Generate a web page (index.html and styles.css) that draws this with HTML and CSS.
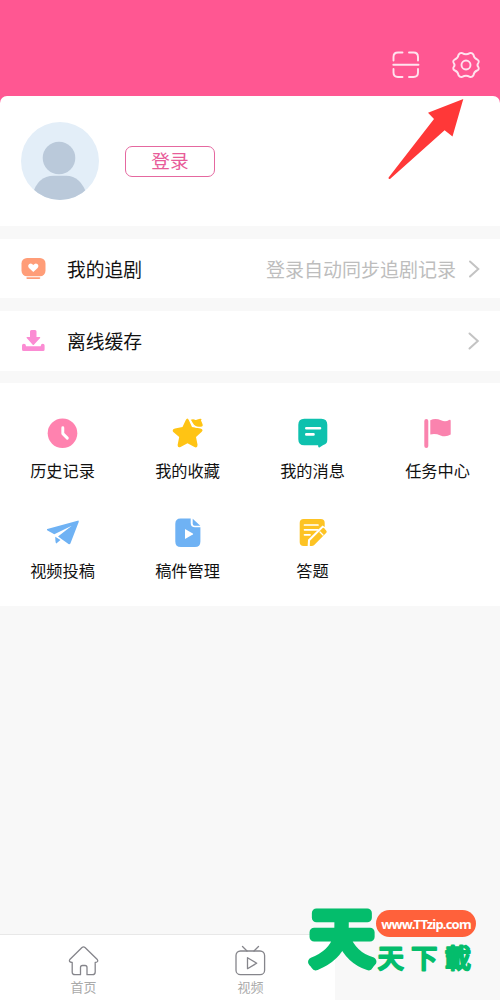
FILE: index.html
```html
<!DOCTYPE html>
<html lang="zh-CN">
<head>
<meta charset="utf-8">
<meta name="viewport" content="width=device-width, initial-scale=1">
<title>我的</title>
<link rel="stylesheet" href="styles.css">
</head>
<body>
<div class="screen">
  <header class="topbar">
    <svg class="top-icon" viewBox="0 0 30 30"><path d="M2.500 10.500V7q0-4.500 4.500-4.500h4.500M18 2.500h4.500Q27 2.500 27 7v3.500M2.500 19v3.500q0 4.500 4.500 4.500h4.500M18 27h4.500q4.500 0 4.500-4.500V19M2.300 14.700h25.200"/></svg>
    <svg class="top-icon" viewBox="0 0 30 30"><path d="M11.200 3.100Q15 5.300 18.800 3.100Q21 2.500 22.400 4.600Q23 8.400 26.200 9.500Q28.600 11 27.300 13Q25.600 15 27.300 17Q28.600 19.200 26.200 20.500Q23 21.600 22.400 25.400Q21 27.500 18.800 26.900Q15 24.700 11.200 26.900Q9 27.500 7.600 25.400Q7 21.600 3.800 20.500Q1.400 19 2.700 17Q4.400 15 2.700 13Q1.400 10.800 3.800 9.500Q7 8.400 7.600 4.600Q9 2.500 11.200 3.100Z"/><circle cx="15" cy="15" r="4.500"/></svg>
  </header>
  <section class="profile">
    <svg class="avatar" viewBox="0 0 78 78"><defs><clipPath id="avatar-clip"><circle cx="39" cy="39" r="39"/></clipPath></defs><g clip-path="url(#avatar-clip)"><path fill="#e3eef8" d="M0 0h78v78H0z"/><circle cx="38" cy="36" r="16.300" fill="#bac9da"/><path fill="#bac9da" d="M11.500 73Q16 54 33 53.700H45Q60 54 66 73V78H12Z"/></g></svg>
    <button class="login">登录</button>
    <svg class="pointer" viewBox="0 0 78 84"><path fill="#ff3838" d="M75.300 1 64.500 38.500 56.600 32.300 2.300 80.800Q0 81.500 .6 79.500L46 21 40 14.700Z"/></svg>
  </section>
  <a class="row">
    <svg class="row-icon" viewBox="0 0 26 26"><rect x="1.500" y="2" width="24" height="18.300" rx="5.500" fill="#ff9d78"/><rect x="6.300" y="21.300" width="14" height="1.600" rx=".8" fill="#ff9d78"/><path fill="#fff" d="M13.300 16 9 12Q7.300 9.700 9.200 8Q11.400 6.600 13.300 9Q15.200 6.600 17.400 8Q19.300 9.700 17.600 12Z"/></svg>
    <span class="row-title">我的追剧</span><span class="hint">登录自动同步追剧记录</span>
    <svg class="chevron" viewBox="0 0 12 18"><path d="M2 1.500 10.300 9 2 16.500"/></svg>
  </a>
  <a class="row row-cache">
    <svg class="row-icon" viewBox="0 0 26 26"><path fill="#fb8cd3" d="M10 3.500Q10 2 11.500 2h3.500Q16.500 2 16.500 3.500v5.500h3.300q.9.300.3 1.100L13.900 16.700q-.6.500-1.200 0L6.700 10.100q-.6-.8.300-1.100H10ZM2 17.500q0-1.700 1.900-1.700 1.900 0 2.200 2.400H20.600q.3-2.400 2.200-2.400 1.800 0 1.800 1.700v4q0 1.500-1.500 1.500H3.500Q2 23 2 21.500Z"/></svg>
    <span class="row-title">离线缓存</span>
    <svg class="chevron" viewBox="0 0 12 18"><path d="M1.500 1.500 9.800 9 1.500 16.500"/></svg>
  </a>
  <section class="grid">
    <a class="item"><svg viewBox="0 0 32 32"><circle cx="15.500" cy="16.200" r="14.800" fill="#ff82af"/><path class="cut" d="M15.800 10.800v5.800l4.500 4.500" stroke-width="2.900"/></svg>历史记录</a>
    <a class="item"><svg viewBox="0 0 32 32"><path fill="#ffc414" d="M13.800 3Q15.300 0 16.800 3L20 10 28.500 11.500Q32 12.500 29.500 15L24 20 25.500 27.500Q25.800 31.800 22 29.800L15.500 26.200 9 29.800Q5.200 31.500 5.700 27.500L7.200 20 1.300 15Q-.5 12.300 3 11.500L10.500 10Z"/><path fill="#ffc414" stroke="#fff" stroke-width="1.300" d="M18 2.500Q21 .6 23.800 2.400L28.500 1Q30.900 1.100 29.700 3.600L31.200 7Q32 10.900 28 10.300Q22.500 10.800 20.400 6.500Z"/></svg>我的收藏</a>
    <a class="item"><svg viewBox="0 0 32 32"><path fill="#0ec1ae" d="M7.300 1.800h17q6 0 6 6v15q0 4.500-4 5.200l-3.900 2.500q-1.300.5-1.300-2.200h-13.800q-6 0-6-6V7.800q0-6 6-6Z"/><path class="cut" d="M9.300 11.200h13.700M9.300 17.400h7.200" stroke-width="2.600"/></svg>我的消息</a>
    <a class="item"><svg viewBox="0 0 32 32"><rect x="2.300" y="2" width="4" height="29" rx="2" fill="#fa83ae"/><path fill="#fa83ae" d="M8.300 3.200Q13.500 .8 19 3.300 23.500 5.200 27 3 28.700 2 28.700 4V17.500Q24 20.500 18.500 18.400 13.500 16.400 8.300 17.500Z"/></svg>任务中心</a>
    <a class="item"><svg viewBox="0 0 32 32"><path fill="#6fb2f4" d="M31.500 3.500 .3 11.900Q-.7 12.400 .5 13.400L7.300 17.200 24.800 8.700 11 19.500 21.500 27Q22.700 27.700 23.400 26.500L31.800 4.800ZM8.300 19.700 13.500 22.900 9.300 26.400Q8.200 26 8.300 19.700Z"/></svg>视频投稿</a>
    <a class="item"><svg viewBox="0 0 32 32"><path fill="#6fb2f4" d="M8.500 1.500H18.700V6q0 4.300 4.300 4.300h5.400v14.200q0 5.500-5.500 5.500h-14Q3.300 30 3.300 24.500V7q0-5.500 5.200-5.500Z"/><path fill="#6fb2f4" d="M20.700 1.800 28.300 8.700H22.700q-2 0-2-2Z"/><path fill="#fff" d="M13 12 20.800 16.400q.8.600 0 1.200L13 22Z"/></svg>稿件管理</a>
    <a class="item"><svg viewBox="0 0 32 32"><rect x="2.700" y="2" width="25" height="27" rx="4" fill="#fdc324"/><path fill="#fff" d="M10.600 30 11 22.800 25.500 8.500 34 14V30Z"/><path class="cut" d="M7.500 8h13.500M7.500 12.800h13.500M7.500 17.800h5.500" stroke-width="1.700"/><path fill="#fdc324" d="M12.800 29 13 23.700 25.700 11Q26.500 10.300 27.300 11.200L29.500 14Q30 15 29.300 15.700L17 28.300Q16 29 14.800 29Z"/><path class="cut" d="m23 15 3 3" stroke-width="1.300"/></svg>答题</a>
  </section>
  <nav class="tabs">
    <a class="tab"><svg viewBox="0 0 32 32"><path d="M14 2.500Q15.500 1.200 17 2.500L29.300 14.500Q30.900 17 27.200 17.500V27Q27.200 29.700 24.500 29.700H19V22.500Q19 20.500 17 20.500H14.500Q12.500 20.500 12.500 22.500V29.700H7Q4.200 29.700 4.200 27V17.500Q.3 17 1.800 14.500Z"/></svg>首页</a>
    <a class="tab"><svg viewBox="0 0 32 32"><rect x="1" y="6" width="28.600" height="23.700" rx="4.500"/><path d="m7.500 1.500 4.500 4.500M23.500 1.500 19 6M12.500 12.700v11l9.200-5.500Z"/></svg>视频</a>
  </nav>
  <div class="watermark">
    <svg class="mark-big" viewBox="0 0 70 76"><text x="3" y="57" font-size="62" textLength="64" lengthAdjust="spacingAndGlyphs">天</text></svg>
    <span class="mark-url">www.TTzip.com</span>
    <svg class="mark-name" viewBox="0 0 101 28"><text x="1.500" y="24" font-size="26.500" letter-spacing="7">天下載</text></svg>
  </div>
</div>
</body>
</html>
```
FILE: styles.css
```css
* { box-sizing: border-box; }
body { margin: 0; font-family: "Noto Sans CJK SC", sans-serif; color: #111; }
svg { display: block; flex: none; }
.screen { position: relative; display: flex; flex-direction: column; width: 500px; height: 1000px; overflow: hidden; background: #f8f8f8; }
.topbar { display: flex; justify-content: flex-end; gap: 30px; height: 106px; padding: 50px 19px 0 0; background: #ff5792; }
.top-icon { width: 30px; height: 30px; fill: none; stroke: #ffe3ee; stroke-width: 1.9; stroke-linecap: round; stroke-linejoin: round; }
.profile { position: relative; display: flex; align-items: center; gap: 26px; height: 130px; margin-top: -10px; padding: 0 21px; background: #fff; border-radius: 7px 7px 0 0; }
.avatar { width: 78px; height: 78px; }
.login { width: 90px; height: 31px; padding: 0 0 3px; border: 1px solid #e568a0; border-radius: 7px; background: #fff; color: #e85c99; font: 18.700px/26px "Noto Sans CJK SC", sans-serif; }
.pointer { position: absolute; top: 2px; left: 388px; width: 78px; height: 84px; }
.row { display: flex; align-items: center; height: 59px; margin-top: 13px; padding: 0 20px; background: #fff; font-size: 18.800px; }
.row-cache { height: 60px; }
.row-cache .row-title { padding-bottom: 2px; }
.row-icon { width: 26px; height: 26px; margin-right: 21px; }
.row-title { flex: 1; }
.hint { color: #bdbdbd; font-size: 19px; margin-right: 12px; }
.chevron { width: 12px; height: 18px; fill: none; stroke: #c3c3c3; stroke-width: 2; stroke-linecap: round; }
.grid { display: grid; grid-template-columns: repeat(4, 125px); grid-auto-rows: 100px; height: 223px; margin-top: 12px; padding-top: 34px; background: #fff; }
.item { display: flex; flex-direction: column; align-items: center; gap: 9px; font-size: 16.200px; line-height: 24px; }
.item svg { width: 32px; height: 32px; }
.cut { fill: none; stroke: #fff; stroke-linecap: round; stroke-linejoin: round; }
.tabs { display: grid; grid-template-columns: repeat(2, 167px); width: 335px; height: 66px; margin-top: auto; border-top: 1px solid #e8e8e8; background: #fff; }
.tab { display: flex; flex-direction: column; align-items: center; padding-top: 10px; color: #aaa; font-size: 13px; line-height: 18px; gap: 1px; }
.tab svg { width: 32px; height: 32px; fill: none; stroke: #85858b; stroke-width: 1.3; stroke-linejoin: round; stroke-linecap: round; }
.watermark { position: absolute; left: 307px; top: 904px; display: grid; grid-template-columns: 69px 101px; grid-template-rows: 40px 30px; }
.mark-big, .mark-name { fill: #04bd6c; stroke: #04bd6c; stroke-linejoin: round; overflow: visible; }
.mark-big { grid-row: 1 / 3; width: 70px; height: 76px; font-weight: 400; stroke-width: 9px; }
.mark-name { width: 101px; height: 28px; font-weight: 500; stroke-width: 1.8px; }
.mark-url { align-self: start; width: 100px; margin-top: 6px; height: 27px; border-radius: 14px; background: #ff613b; color: #fff; font: bold 13px/29px "Noto Sans", sans-serif; text-align: center; letter-spacing: -.8px; }
```
